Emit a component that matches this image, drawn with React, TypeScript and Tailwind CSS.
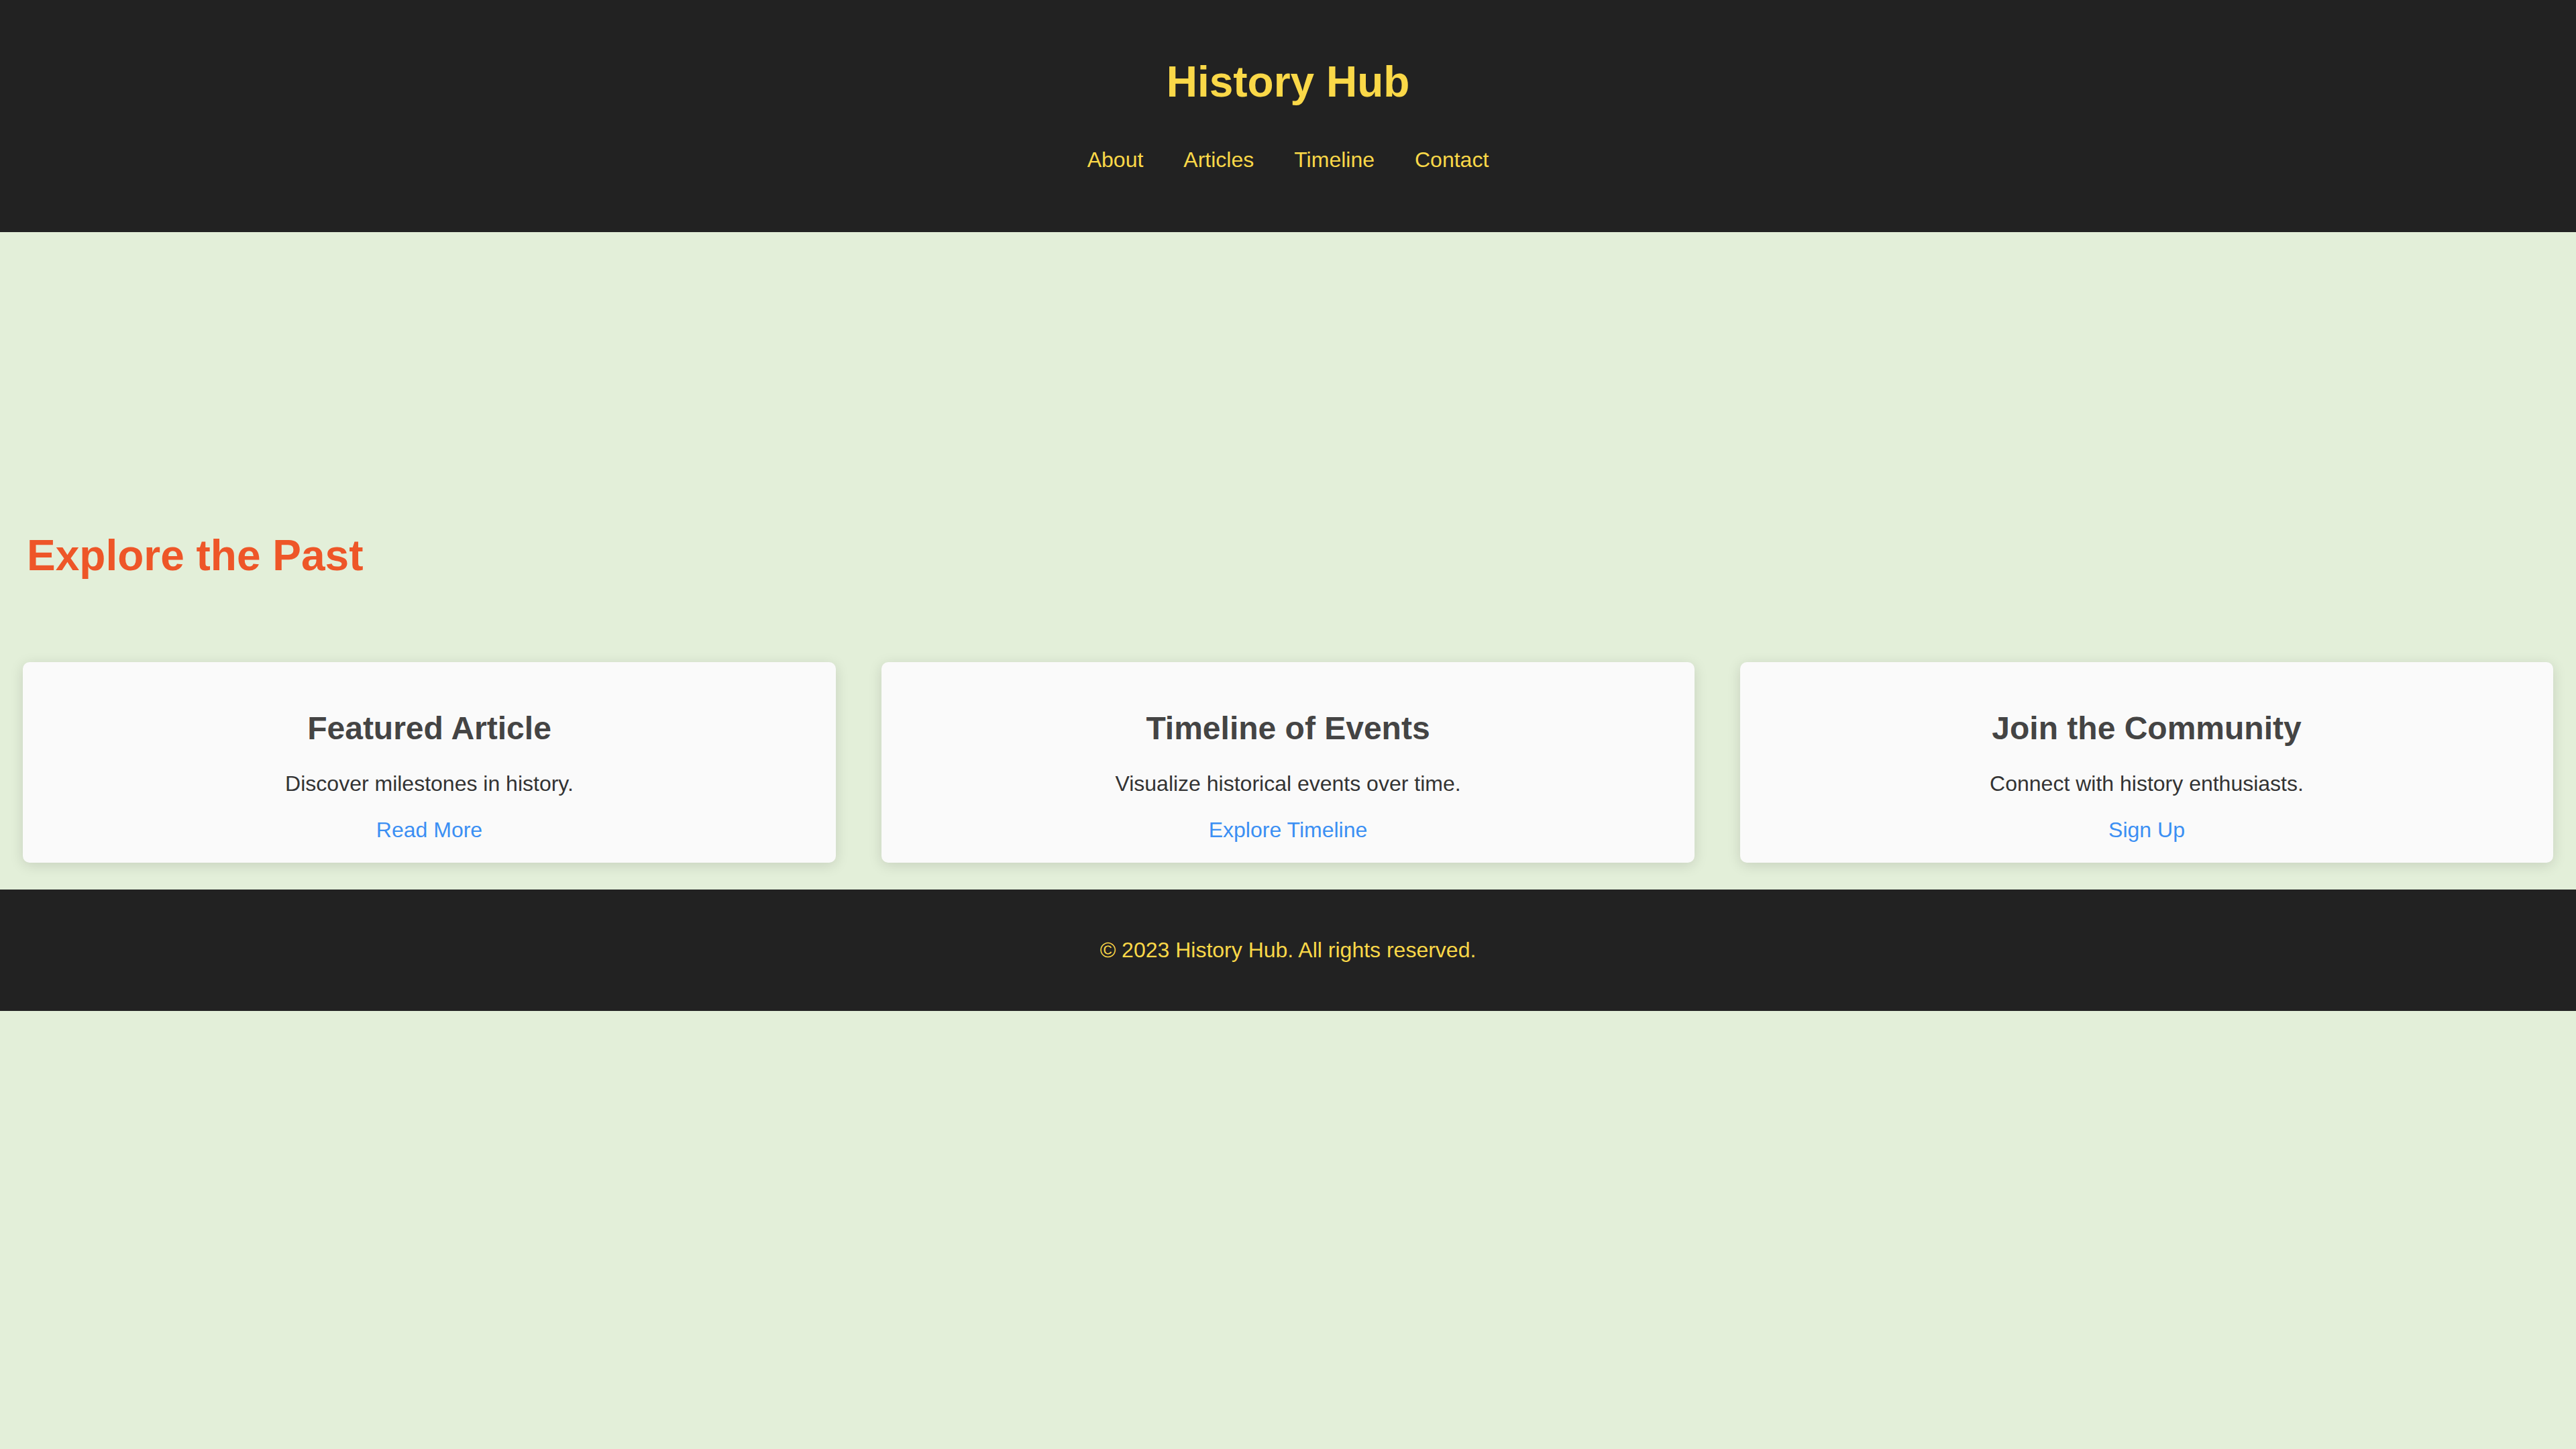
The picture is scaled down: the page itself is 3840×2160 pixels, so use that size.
import React from "react";

const cards = [
  { title: "Featured Article", text: "Discover milestones in history.", link: "Read More" },
  { title: "Timeline of Events", text: "Visualize historical events over time.", link: "Explore Timeline" },
  { title: "Join the Community", text: "Connect with history enthusiasts.", link: "Sign Up" },
];

const Card = ({ title, text, link }: { title: string; text: string; link: string }) => {
  return (
    <div className="flex-1 flex flex-col items-center pt-[71px] pb-[30px] bg-[#fafafa] rounded-[10px] shadow-[0_4px_20px_rgba(0,0,0,0.13)]">
      <h2 className="text-[48px] font-bold leading-[normal] text-[#444444] mb-[37px]">{title}</h2>
      <p className="text-[32px] leading-[normal] text-[#333333] mb-[32px]">{text}</p>
      <a href="#" className="text-[32px] leading-[normal] text-[#3b8ff3]">
        {link}
      </a>
    </div>
  );
};

const App = () => {
  return (
    <div className="min-h-screen w-full bg-[#e3efd9] font-['Liberation_Sans',Arial,sans-serif]">
      <header className="flex flex-col items-center pt-[85px] pb-[89px] bg-[#222222]">
        <h1 className="text-[64px] font-bold leading-[normal] text-[#fad848]">History Hub</h1>
        <nav className="flex flex-row gap-[60px] mt-[61px]">
          {["About", "Articles", "Timeline", "Contact"].map((item) => (
            <a key={item} href="#" className="text-[32px] leading-[normal] text-[#fad848]">
              {item}
            </a>
          ))}
        </nav>
      </header>

      <section className="pt-[445px] px-[40px]">
        <h2 className="text-[64px] font-bold leading-[normal] text-[#ee5628]">Explore the Past</h2>
      </section>

      <section className="flex flex-row gap-[68px] px-[34px] mt-[122px]">
        {cards.map((c) => (
          <Card key={c.title} {...c} />
        ))}
      </section>

      <footer className="mt-[40px] py-[72px] bg-[#222222] text-center">
        <p className="text-[32px] leading-[normal] text-[#fad848]">© 2023 History Hub. All rights reserved.</p>
      </footer>
    </div>
  );
};

export default App;
